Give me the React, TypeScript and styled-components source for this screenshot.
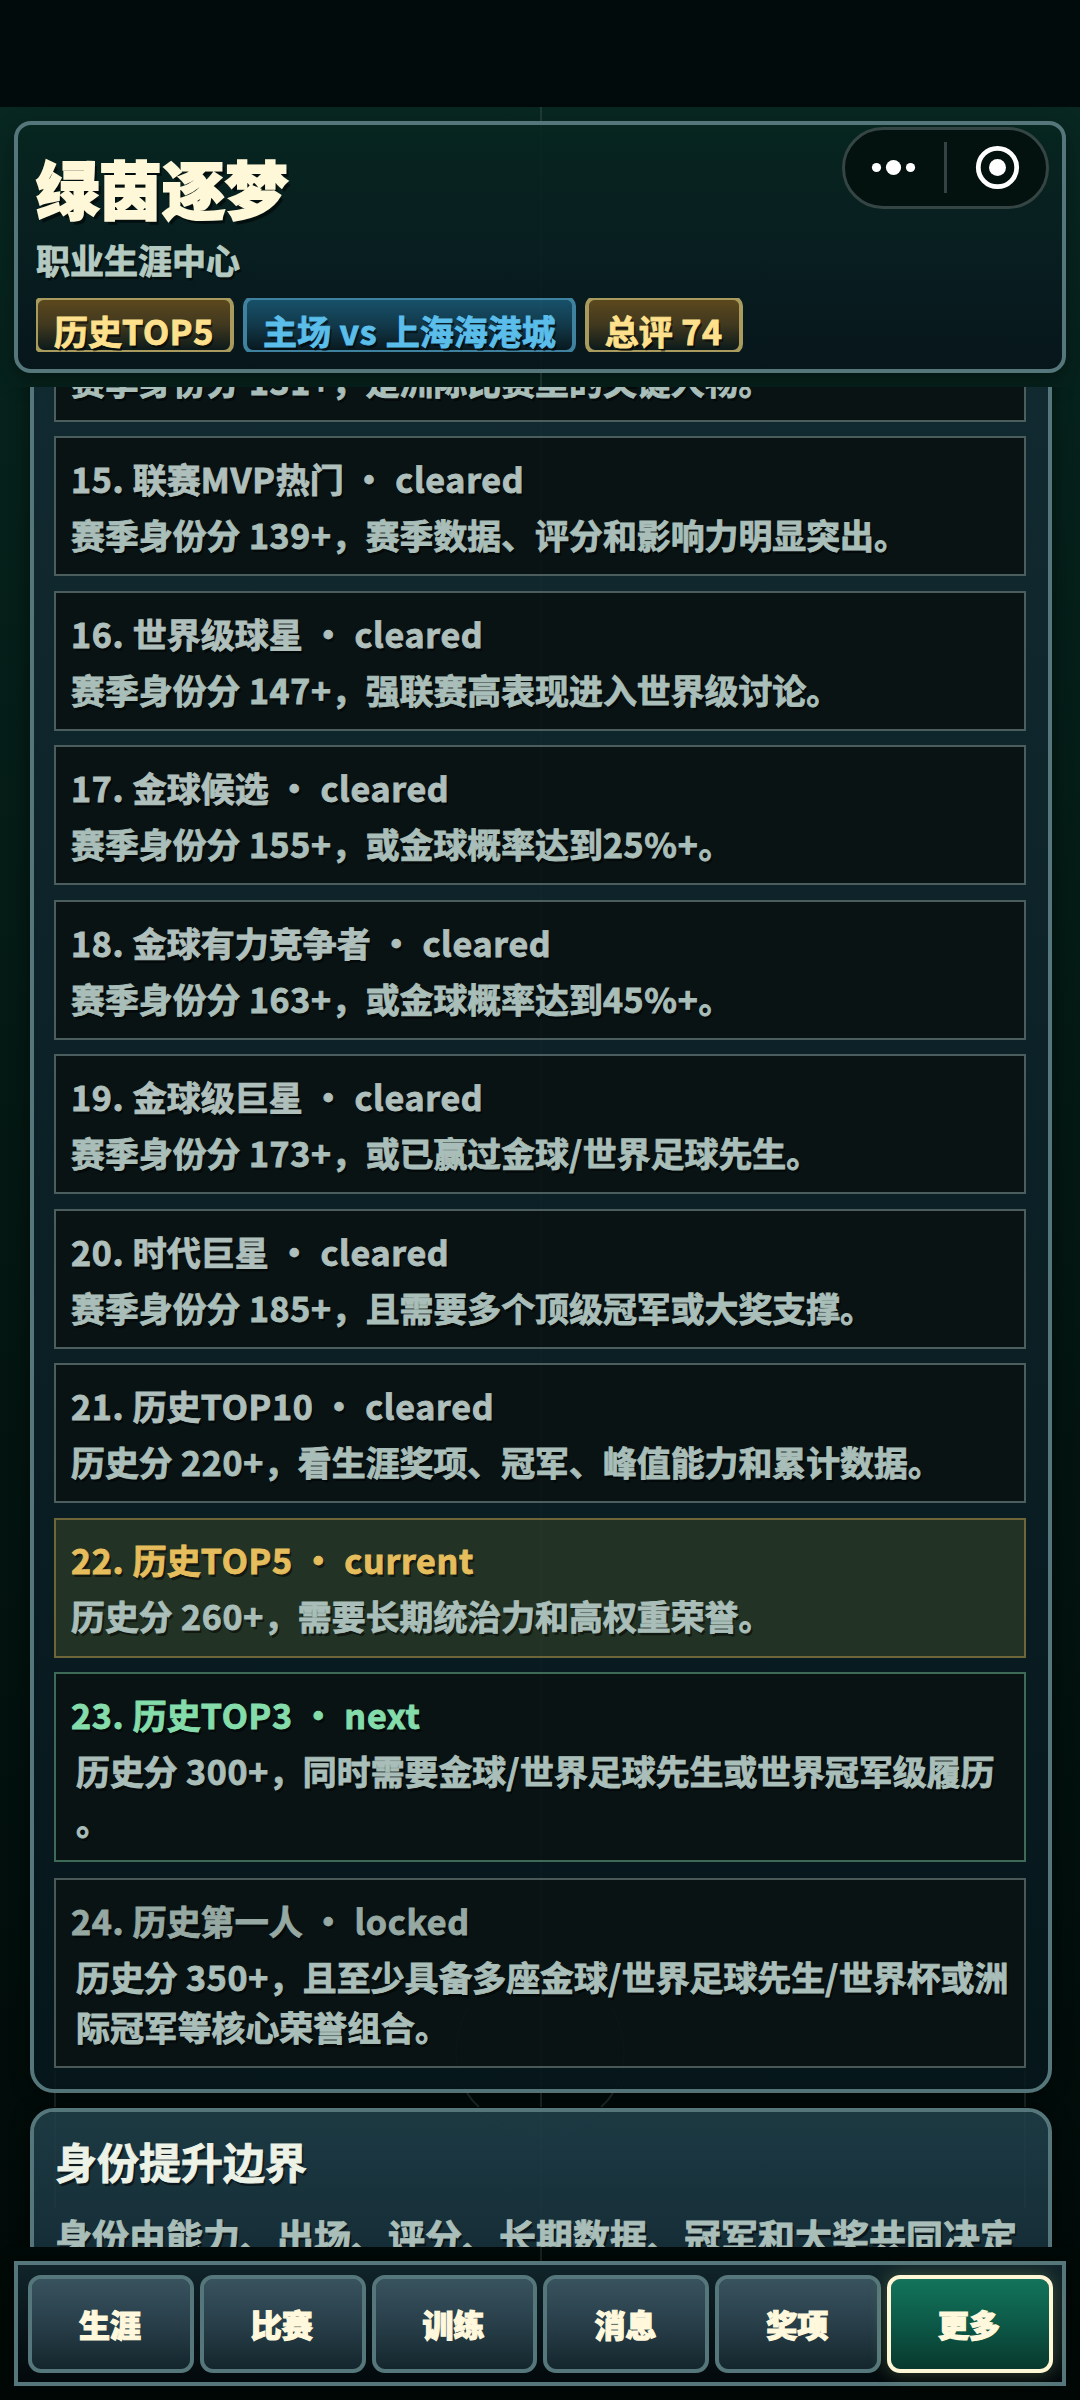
import React from "react";
import styled, { createGlobalStyle, css } from "styled-components";

const GlobalStyle = createGlobalStyle`
  * { box-sizing: border-box; }
  html, body { margin: 0; padding: 0; background: #010707; }
`;

const LINE = "#55767a";

const Screen = styled.div`
  position: relative;
  width: 1080px;
  height: 2400px;
  overflow: hidden;
  display: flex;
  flex-direction: column;
  font-family: "Noto Sans CJK SC", sans-serif;
  font-weight: 700;
  -webkit-text-stroke: 0.9px currentColor;
  background: linear-gradient(180deg, #0a2a24 0%, #07241e 10%, #05201a 20%, #041712 50%, #02100d 75%, #010806 100%);
`;

const PitchLines = styled.svg`
  position: absolute;
  left: 0;
  top: 0;
  width: 1080px;
  height: 2400px;
  pointer-events: none;
`;

const StatusBar = styled.div`
  position: relative;
  flex: none;
  height: 107px;
  background: #010b0b;
`;

const Header = styled.header`
  position: relative;
  flex: none;
  height: 252px;
  margin: 14px 14px 0;
  padding: 19px 18px 0;
  border: 4px solid ${LINE};
  border-radius: 17px;
  background: linear-gradient(180deg, #06261f 0%, #07231f 12%, #081f20 45%, #07161b 100%);
  box-shadow: 0 8px 22px rgba(0, 0, 0, 0.35);
`;

const Title = styled.h1`
  margin: 0;
  height: 88px;
  line-height: 86px;
  font-size: 63px;
  font-weight: 900;
  color: #fff8d8;
  -webkit-text-stroke: 2px currentColor;
  text-shadow: 3px 4px 0 rgba(0, 0, 0, 0.55);
`;

const Subtitle = styled.div`
  height: 56px;
  line-height: 56px;
  font-size: 34px;
  color: #b4cac0;
  text-shadow: 2px 3px 0 rgba(0, 0, 0, 0.5);
`;

const ChipRow = styled.div`
  display: flex;
  gap: 9px;
  height: 54px;
  margin-top: 10px;
  overflow: hidden;
`;

const Chip = styled.div<{ $tone: "gold" | "blue" }>`
  flex: none;
  height: 58px;
  margin-top: -2px;
  padding: 10px 16px 0;
  border: 4px solid;
  border-radius: 10px;
  line-height: 42px;
  font-size: 34px;
  white-space: nowrap;
  text-shadow: 2px 3px 0 rgba(0, 0, 0, 0.5);
  &:first-child { margin-left: -2px; }
  ${(p) =>
    p.$tone === "gold"
      ? css`
          color: #ffe08c;
          border-color: #a99a5e;
          background: linear-gradient(180deg, #5c481d 0%, #40381f 50%, #0c1a1a 100%) padding-box;
        `
      : css`
          color: #5abdea;
          border-color: #3f82a0;
          background: linear-gradient(180deg, #17516a 0%, #12394a 50%, #08191f 100%) padding-box;
        `}
`;

const Capsule = styled.div`
  position: absolute;
  left: 824px;
  top: 2px;
  width: 207px;
  height: 82px;
  border: 3px solid #344544;
  border-radius: 41px;
  background: #03120f;
  display: flex;
  svg { display: block; }
`;

const Content = styled.main`
  position: relative;
  flex: none;
  height: 1860px;
  margin-top: 14px;
  padding: 0 28px 0 30px;
  overflow: hidden;
  display: flex;
  flex-direction: column;
  gap: 15px;
`;

const IdentityPanel = styled.section`
  flex: none;
  display: flex;
  flex-direction: column;
  gap: 14.8px;
  margin-top: -150px;
  height: 1855.5px;
  padding: 41px 22px 0 20px;
  border: 4px solid ${LINE};
  border-radius: 24px;
  background: linear-gradient(180deg, rgba(18, 43, 50, 0.97) 0%, rgba(6, 23, 28, 0.94) 100%) padding-box;
  box-shadow: 0 0 20px rgba(0, 0, 0, 0.45);
`;

type Status = "cleared" | "current" | "next" | "locked";

const titleColor = { cleared: "#afbfbb", current: "#e6bd5c", next: "#85dcab", locked: "#96a8a2" };
const cardBorder = { cleared: "#4c5d5d", current: "#6e6638", next: "#3d6b58", locked: "#4a5858" };

const Card = styled.article<{ $status: Status; $wrapped?: boolean }>`
  flex: none;
  height: ${(p) => (p.$wrapped ? 190 : 139.7)}px;
  padding: 12.6px 0 0 15px;
  border: 2px solid ${(p) => cardBorder[p.$status]};
  background: ${(p) => (p.$status === "current" ? "#223224" : "#091314")};
  text-shadow: 2px 3px 0 rgba(0, 0, 0, 0.5);
  font-size: 34px;
  &:last-child { margin-top: 1.3px; }
`;

const CardTitle = styled.h3<{ $status: Status }>`
  margin: 0;
  height: 56px;
  line-height: 56px;
  font-size: inherit;
  font-weight: 700;
  white-space: pre;
  color: ${(p) => titleColor[p.$status]};
`;

const CardText = styled.p<{ $wrapped?: boolean }>`
  margin: 3px 0 0 ${(p) => (p.$wrapped ? 5 : 0)}px;
  font-size: 33.9px;
  line-height: 50px;
  white-space: pre;
  color: #a9beb8;
`;

const Latin = styled.span`
  letter-spacing: 0.72px;
`;

const RulePanel = styled.section`
  flex: none;
  height: 320px;
  padding: 18px 21px 0;
  border: 4px solid ${LINE};
  border-radius: 24px;
  background: linear-gradient(180deg, #1c3942 0%, #17303a 35%, #0b1d24 100%) padding-box;
  box-shadow: 0 0 20px rgba(0, 0, 0, 0.45);
  text-shadow: 2px 3px 0 rgba(0, 0, 0, 0.5);
`;

const RuleTitle = styled.h2`
  margin: 0;
  height: 62px;
  line-height: 62px;
  font-size: 42px;
  color: #edf2e6;
`;

const RuleText = styled.p`
  margin: 17px 0 0;
  line-height: 54px;
  font-size: 37px;
  white-space: nowrap;
  color: #a9beb8;
`;

const TabBar = styled.nav`
  position: relative;
  flex: none;
  display: flex;
  gap: 6px;
  height: 125px;
  margin: 14px 14px 0;
  padding: 10px 9px 0 10px;
  border: 4px solid ${LINE};
  background: linear-gradient(180deg, #10242a 0%, #03090c 100%);
  box-shadow: 0 0 14px rgba(0, 0, 0, 0.5);
`;

const Tab = styled.button<{ $active?: boolean }>`
  flex: 1;
  height: 98px;
  padding: 0 2px 2px 0;
  border: 4px solid ${(p) => (p.$active ? "#fff8d6" : LINE)};
  border-radius: 13px;
  background: ${(p) =>
    p.$active
      ? "linear-gradient(180deg, #12745a 0%, #0d5c49 45%, #08392f 100%)"
      : "linear-gradient(180deg, #38525e 0%, #2a414c 45%, #14262d 100%)"} padding-box;
  box-shadow: ${(p) => (p.$active ? "0 0 18px rgba(190, 220, 130, 0.28)" : "none")};
  color: #fff8dc;
  font: 900 31px "Noto Sans CJK SC", sans-serif;
  -webkit-text-stroke: 1.2px currentColor;
`;

interface Level {
  title: string;
  status: Status;
  text: string;
}

const levels: Level[] = [
  { title: "14. 洲际巨星", status: "cleared", text: "赛季身份分 131+，是洲际比赛里的关键人物。" },
  { title: "15. 联赛MVP热门", status: "cleared", text: "赛季身份分 139+，赛季数据、评分和影响力明显突出。" },
  { title: "16. 世界级球星", status: "cleared", text: "赛季身份分 147+，强联赛高表现进入世界级讨论。" },
  { title: "17. 金球候选", status: "cleared", text: "赛季身份分 155+，或金球概率达到25%+。" },
  { title: "18. 金球有力竞争者", status: "cleared", text: "赛季身份分 163+，或金球概率达到45%+。" },
  { title: "19. 金球级巨星", status: "cleared", text: "赛季身份分 173+，或已赢过金球/世界足球先生。" },
  { title: "20. 时代巨星", status: "cleared", text: "赛季身份分 185+，且需要多个顶级冠军或大奖支撑。" },
  { title: "21. 历史TOP10", status: "cleared", text: "历史分 220+，看生涯奖项、冠军、峰值能力和累计数据。" },
  { title: "22. 历史TOP5", status: "current", text: "历史分 260+，需要长期统治力和高权重荣誉。" },
  { title: "23. 历史TOP3", status: "next", text: "历史分 300+，同时需要金球/世界足球先生或世界冠军级履历\n。" },
  { title: "24. 历史第一人", status: "locked", text: "历史分 350+，且至少具备多座金球/世界足球先生/世界杯或洲\n际冠军等核心荣誉组合。" },
];

const tabs = ["生涯", "比赛", "训练", "消息", "奖项", "更多"];

/* Opens up the Latin runs inside Chinese text a little. */
function Mixed({ text }: { text: string }) {
  return (
    <>
      {text.split(/([\x20-\x7e·]+)/).map((run, i) => (i % 2 ? <Latin key={i}>{run}</Latin> : run))}
    </>
  );
}

export default function App() {
  return (
    <Screen>
      <GlobalStyle />
      <StatusBar />
      <Header>
        <Title>绿茵逐梦</Title>
        <Subtitle>职业生涯中心</Subtitle>
        <ChipRow>
          <Chip $tone="gold"><Mixed text="历史TOP5" /></Chip>
          <Chip $tone="blue"><Mixed text="主场 vs 上海海港城" /></Chip>
          <Chip $tone="gold"><Mixed text="总评 74" /></Chip>
        </ChipRow>
        <Capsule>
          <svg width="201" height="76" viewBox="0 0 201 76">
            <circle cx="31.5" cy="37.5" r="4.6" fill="#fff" />
            <circle cx="48.5" cy="37.5" r="7.6" fill="#fff" />
            <circle cx="65.5" cy="37.5" r="4.6" fill="#fff" />
            <rect x="99" y="12" width="3" height="51" fill="#344342" />
            <circle cx="152.5" cy="37.5" r="19.2" fill="none" stroke="#fff" strokeWidth="4.8" />
            <circle cx="152.5" cy="37.5" r="8.5" fill="#fff" />
          </svg>
        </Capsule>
      </Header>
      <Content>
        <IdentityPanel>
          {levels.map((l) => {
            const wrapped = l.text.includes("\n");
            return (
              <Card key={l.title} $status={l.status} $wrapped={wrapped}>
                <CardTitle $status={l.status}><Mixed text={`${l.title} · ${l.status}`} /></CardTitle>
                <CardText $wrapped={wrapped}><Mixed text={l.text} /></CardText>
              </Card>
            );
          })}
        </IdentityPanel>
        <RulePanel>
          <RuleTitle>身份提升边界</RuleTitle>
          <RuleText>身份由能力、出场、评分、长期数据、冠军和大奖共同决定</RuleText>
        </RulePanel>
      </Content>
      <TabBar>
        {tabs.map((t) => (
          <Tab key={t} $active={t === "更多"}>{t}</Tab>
        ))}
      </TabBar>
      <PitchLines viewBox="0 0 1080 2400" fill="none">
        <path d="M541 107V121M541 373V387M541 2093V2107M541 2247V2261" stroke="#fff" strokeOpacity="0.09" strokeWidth="2" />
        <path d="M541 125V369M541 387V2247" stroke="#fff" strokeOpacity="0.01" strokeWidth="2" />
        <path d="M55 2093V2107M1025 2093V2107" stroke="#fff" strokeOpacity="0.09" strokeWidth="2" />
        <path d="M55 2111V2208M1025 2111V2208M55 2070V2089M1025 2070V2089" stroke="#fff" strokeOpacity="0.02" strokeWidth="2" />
        <circle cx="540" cy="2052" r="84" stroke="#cfe" strokeOpacity="0.012" strokeWidth="2" />
        <path d="M467 2093Q472 2101 479 2107M613 2093Q608 2101 601 2107" stroke="#fff" strokeOpacity="0.1" strokeWidth="2" />
      </PitchLines>
    </Screen>
  );
}
